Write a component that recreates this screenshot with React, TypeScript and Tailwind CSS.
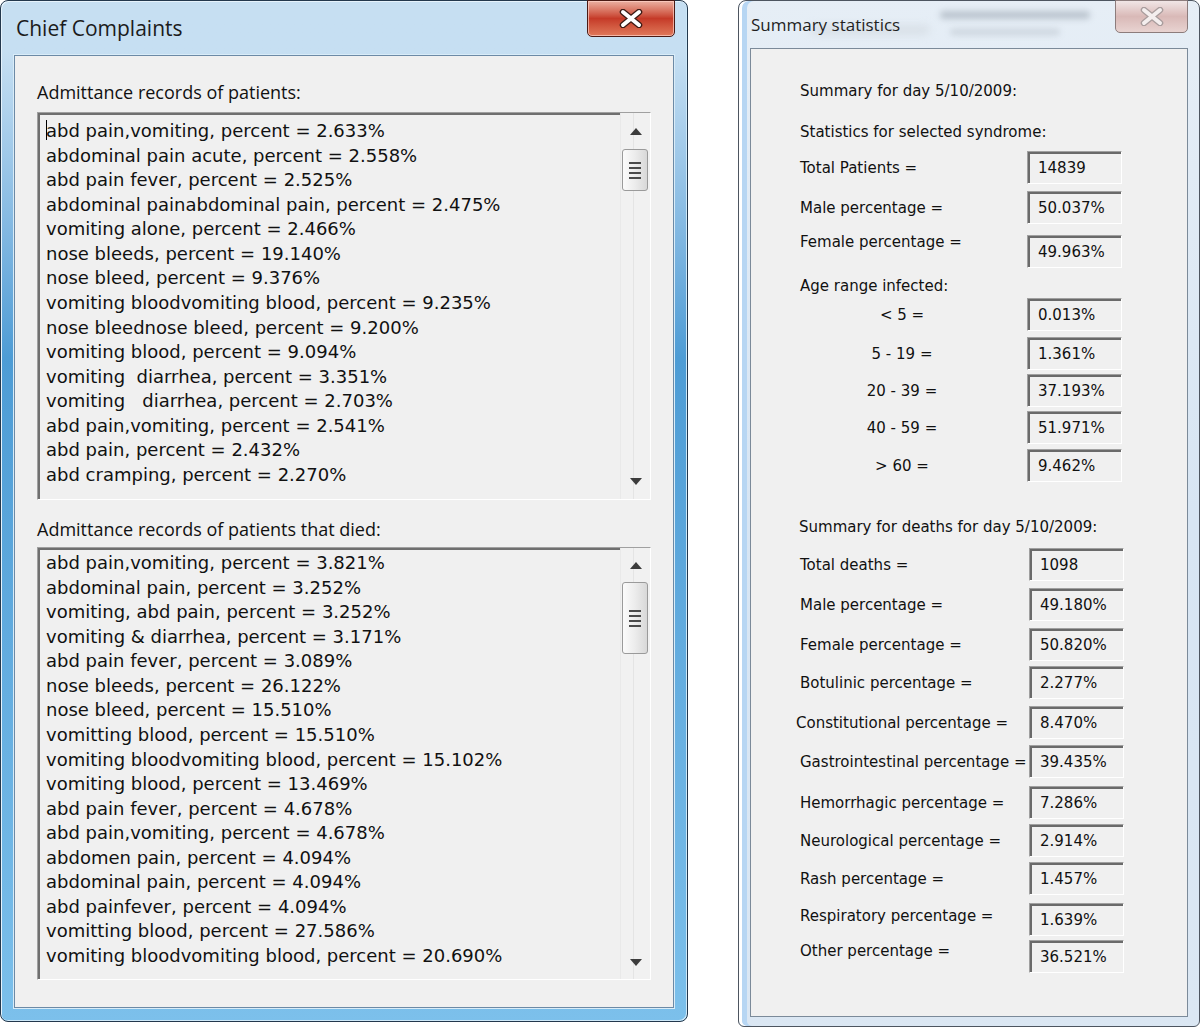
import React from "react";

/** Rekaman keluhan pasien (semua). */
const ALL_RECORDS = [
  "abd pain,vomiting, percent = 2.633%",
  "abdominal pain acute, percent = 2.558%",
  "abd pain fever, percent = 2.525%",
  "abdominal painabdominal pain, percent = 2.475%",
  "vomiting alone, percent = 2.466%",
  "nose bleeds, percent = 19.140%",
  "nose bleed, percent = 9.376%",
  "vomiting bloodvomiting blood, percent = 9.235%",
  "nose bleednose bleed, percent = 9.200%",
  "vomiting blood, percent = 9.094%",
  "vomiting  diarrhea, percent = 3.351%",
  "vomiting   diarrhea, percent = 2.703%",
  "abd pain,vomiting, percent = 2.541%",
  "abd pain, percent = 2.432%",
  "abd cramping, percent = 2.270%",
];

/** Rekaman keluhan pasien yang meninggal. */
const DIED_RECORDS = [
  "abd pain,vomiting, percent = 3.821%",
  "abdominal pain, percent = 3.252%",
  "vomiting, abd pain, percent = 3.252%",
  "vomiting & diarrhea, percent = 3.171%",
  "abd pain fever, percent = 3.089%",
  "nose bleeds, percent = 26.122%",
  "nose bleed, percent = 15.510%",
  "vomitting blood, percent = 15.510%",
  "vomiting bloodvomiting blood, percent = 15.102%",
  "vomiting blood, percent = 13.469%",
  "abd pain fever, percent = 4.678%",
  "abd pain,vomiting, percent = 4.678%",
  "abdomen pain, percent = 4.094%",
  "abdominal pain, percent = 4.094%",
  "abd painfever, percent = 4.094%",
  "vomitting blood, percent = 27.586%",
  "vomiting bloodvomiting blood, percent = 20.690%",
];

interface StatRow {
  label: string;
  value: string;
  mt: string;
  labelCls?: string;
  center?: boolean;
}

const SELECTED_ROWS: StatRow[] = [
  { label: "Total Patients =", value: "14839", mt: "mt-[9px]" },
  { label: "Male percentage =", value: "50.037%", mt: "mt-[7px]" },
  { label: "Female percentage =", value: "49.963%", mt: "mt-[11px]", labelCls: "mb-[20px]" },
];

const AGE_ROWS: StatRow[] = [
  { label: "< 5 =", value: "0.013%", mt: "mt-[2px]", center: true },
  { label: "5 - 19 =", value: "1.361%", mt: "mt-[6px]", center: true },
  { label: "20 - 39 =", value: "37.193%", mt: "mt-[4px]", center: true },
  { label: "40 - 59 =", value: "51.971%", mt: "mt-[4px]", center: true },
  { label: "> 60 =", value: "9.462%", mt: "mt-[5px]", center: true },
];

const DEATH_ROWS: StatRow[] = [
  { label: "Total deaths =", value: "1098", mt: "mt-[11px]" },
  { label: "Male percentage =", value: "49.180%", mt: "mt-[7px]" },
  { label: "Female percentage =", value: "50.820%", mt: "mt-[7px]" },
  { label: "Botulinic percentage =", value: "2.277%", mt: "mt-[5px]" },
  { label: "Constitutional percentage =", value: "8.470%", mt: "mt-[7px]", labelCls: "-translate-x-[4px]" },
  { label: "Gastrointestinal percentage =", value: "39.435%", mt: "mt-[6px]" },
  { label: "Hemorrhagic percentage =", value: "7.286%", mt: "mt-[8px]" },
  { label: "Neurological percentage =", value: "2.914%", mt: "mt-[5px]" },
  { label: "Rash percentage =", value: "1.457%", mt: "mt-[5px]" },
  { label: "Respiratory percentage =", value: "1.639%", mt: "mt-[8px]", labelCls: "mb-[8px]" },
  { label: "Other percentage =", value: "36.521%", mt: "mt-[4px]", labelCls: "mb-[12px]" },
];

const TAHOMA = "font-['DejaVu_Sans',Verdana,sans-serif]";
const SEGOE = "font-['Open_Sans','Noto_Sans',sans-serif]";

/** Tombol tutup jendela (X). */
function CloseGlyph({ active }: { active: boolean }) {
  return (
    <svg width="24" height="19" viewBox="0 0 24 19">
      <path
        d="M4 3 L20 16 M20 3 L4 16"
        stroke={active ? "#3b1a14" : "#a89c9c"}
        strokeWidth="6.5"
        strokeLinecap="round"
      />
      <path
        d="M4 3 L20 16 M20 3 L4 16"
        stroke={active ? "#ffffff" : "#f4eeee"}
        strokeWidth="4"
        strokeLinecap="round"
      />
    </svg>
  );
}

/** Scrollbar vertikal gaya Windows 7. */
function ScrollBar({ arrowH, thumbH }: { arrowH: string; thumbH: string }) {
  return (
    <div className="relative flex w-[30px] flex-shrink-0 flex-col border-l border-[#e9e9e9] bg-[#f1f1f1]">
      <div className="absolute bottom-0 left-[12px] top-0 w-px bg-[#e4e4e4]" />
      <div className={`relative flex ${arrowH} items-center justify-center`}>
        <svg width="12" height="7" viewBox="0 0 12 7">
          <path d="M0 7 L6 0 L12 7 Z" fill="#3c3c3c" />
        </svg>
      </div>
      <div
        className={`relative ml-[1px] flex ${thumbH} w-[26px] flex-col items-center justify-center gap-[3px] rounded-[3px] border border-[#9a9a9a] bg-gradient-to-r from-[#fbfbfb] via-[#ececec] to-[#d8d8d8]`}
      >
        <div className="h-[2px] w-[12px] bg-[#4a4a4a]" />
        <div className="h-[2px] w-[12px] bg-[#4a4a4a]" />
        <div className="h-[2px] w-[12px] bg-[#4a4a4a]" />
        <div className="h-[2px] w-[12px] bg-[#4a4a4a]" />
      </div>
      <div className="flex-1" />
      <div className={`relative flex ${arrowH} items-center justify-center`}>
        <svg width="12" height="7" viewBox="0 0 12 7">
          <path d="M0 0 L12 0 L6 7 Z" fill="#3c3c3c" />
        </svg>
      </div>
    </div>
  );
}

/** Listbox read-only dengan border sunken. */
function ListBox({
  items,
  height,
  pt,
  arrowH,
  thumbH,
  caret,
}: {
  items: string[];
  height: string;
  pt: string;
  arrowH: string;
  thumbH: string;
  caret?: boolean;
}) {
  return (
    <div
      className={`flex ${height} border border-b-white border-l-[#a0a0a0] border-r-white border-t-[#a0a0a0] bg-[#f0f0f0] shadow-[inset_2px_2px_0_#6f6f6f]`}
    >
      <div className={`flex-1 overflow-hidden pl-[8px] ${pt} ${TAHOMA} text-[18px] leading-[24.57px] text-[#111]`}>
        {items.map((t, i) => (
          <div key={i} className="whitespace-pre">
            {caret && i === 0 && <span className="mr-[-1px] inline-block h-[20px] w-px translate-y-[3px] bg-black" />}
            {t}
          </div>
        ))}
      </div>
      <ScrollBar arrowH={arrowH} thumbH={thumbH} />
    </div>
  );
}

/** Kotak nilai statistik (sunken). */
function ValueBox({ value }: { value: string }) {
  return (
    <div
      className={`flex h-[33px] w-[95px] flex-shrink-0 items-center border border-b-white border-l-[#a0a0a0] border-r-white border-t-[#a0a0a0] pl-[10px] shadow-[inset_2px_2px_0_#6a6a6a] ${TAHOMA} text-[15px] text-[#111]`}
    >
      {value}
    </div>
  );
}

function StatLine({ row, labelW }: { row: StatRow; labelW: string }) {
  return (
    <div className={`flex h-[33px] items-center ${row.mt}`}>
      <div className={`${labelW} flex-shrink-0 whitespace-nowrap ${row.labelCls ?? ""}`}>
        {row.center ? <div className="w-[204px] text-center">{row.label}</div> : row.label}
      </div>
      <ValueBox value={row.value} />
    </div>
  );
}

function ChiefComplaints() {
  return (
    <div className="relative flex h-[1022px] w-[688px] flex-shrink-0 flex-col rounded-[8px] border border-[#23384d] bg-gradient-to-b from-[#c6dff2] from-5% via-[#4d9cd5] via-35% to-[#7cc0eb] px-[13px] pb-[13px] shadow-[inset_1px_1px_0_#e6f3fc,inset_-1px_-1px_0_#cde8f8]">
      <div className="flex h-[54px] flex-shrink-0 items-start pl-[2px] pt-[12px]">
        <span className={`${SEGOE} text-[21px] leading-[30px] text-[#1b1b1b]`}>Chief Complaints</span>
      </div>
      {/* Tombol tutup */}
      <div className="absolute right-[12px] top-[-1px] flex h-[37px] w-[88px] items-center justify-center rounded-b-[5px] border border-[#4a1a14] bg-gradient-to-b from-[#eab0a2] via-[#c53a28] to-[#e0785a] shadow-[inset_0_0_0_1px_rgba(255,210,200,0.7)]">
        <CloseGlyph active />
      </div>
      <div className="flex flex-1 flex-col border border-[#6c8aa6] bg-[#f0f0f0] px-[22px] shadow-[0_0_0_1px_#d9ecf8]">
        <div className={`mt-[24px] ${SEGOE} text-[18px] leading-[24px] text-[#111]`}>Admittance records of patients:</div>
        <div className="mt-[8px]">
          <ListBox items={ALL_RECORDS} height="h-[388px]" pt="pt-[4px]" arrowH="h-[36px]" thumbH="h-[42px]" caret />
        </div>
        <div className={`mt-[17px] ${SEGOE} text-[18px] leading-[24px] text-[#111]`}>
          Admittance records of patients that died:
        </div>
        <div className="mt-[6px]">
          <ListBox items={DIED_RECORDS} height="h-[433px]" pt="pt-[3px]" arrowH="h-[34px]" thumbH="h-[72px]" />
        </div>
      </div>
    </div>
  );
}

function SummaryStatistics() {
  return (
    <div className="relative flex h-[1027px] w-[462px] flex-shrink-0 flex-col rounded-t-[8px] rounded-b-[6px] border border-[#4d5560] bg-gradient-to-b from-[#e6eef6] via-[#d7e5f3] to-[#dbe7f3] pb-[9px] pl-[11px] pr-[11px] shadow-[inset_3px_0_0_#ffffff,inset_8px_0_0_#b7d6f3]">
      <div className="relative flex h-[47px] flex-shrink-0 items-start overflow-hidden pt-[10px]">
        <div className="absolute left-[190px] top-[10px] h-[8px] w-[150px] rounded-full bg-[#8f9aa6] opacity-50 blur-[3px]" />
        <div className="absolute left-[200px] top-[28px] h-[6px] w-[110px] rounded-full bg-[#a3acb6] opacity-40 blur-[3px]" />
        <div className="absolute left-[60px] top-[24px] h-[10px] w-[120px] rounded-full bg-[#c6ccd2] opacity-40 blur-[4px]" />
        <span className={`relative pl-[1px] ${SEGOE} text-[17px] leading-[28px] text-[#1f1f1f]`}>Summary statistics</span>
      </div>
      {/* Tombol tutup (jendela tidak aktif) */}
      <div className="absolute right-[11px] top-[-1px] flex h-[33px] w-[73px] items-center justify-center rounded-b-[5px] border border-[#8c7c7c] bg-gradient-to-b from-[#f1e6e6] via-[#d9b9b7] to-[#e8d3d1]">
        <CloseGlyph active={false} />
      </div>
      <div
        className={`flex flex-1 flex-col border border-[#7b8a99] bg-[#f0f0f0] pl-[49px] ${TAHOMA} text-[15px] leading-[20px] text-[#111]`}
      >
        <div className="mt-[32px]">Summary for day 5/10/2009:</div>
        <div className="mt-[21px]">Statistics for selected syndrome:</div>
        {SELECTED_ROWS.map((r) => (
          <StatLine key={r.label} row={r} labelW="w-[227px]" />
        ))}
        <div className="mt-[8px]">Age range infected:</div>
        {AGE_ROWS.map((r) => (
          <StatLine key={r.label} row={r} labelW="w-[227px]" />
        ))}
        <div className="mt-[35px] -ml-[1px]">Summary for deaths for day 5/10/2009:</div>
        {DEATH_ROWS.map((r) => (
          <StatLine key={r.label} row={r} labelW="w-[229px]" />
        ))}
      </div>
    </div>
  );
}

export default function App() {
  return (
    <div className="flex h-[1029px] w-[1200px] items-start gap-[50px] overflow-hidden bg-white">
      <ChiefComplaints />
      <SummaryStatistics />
    </div>
  );
}
